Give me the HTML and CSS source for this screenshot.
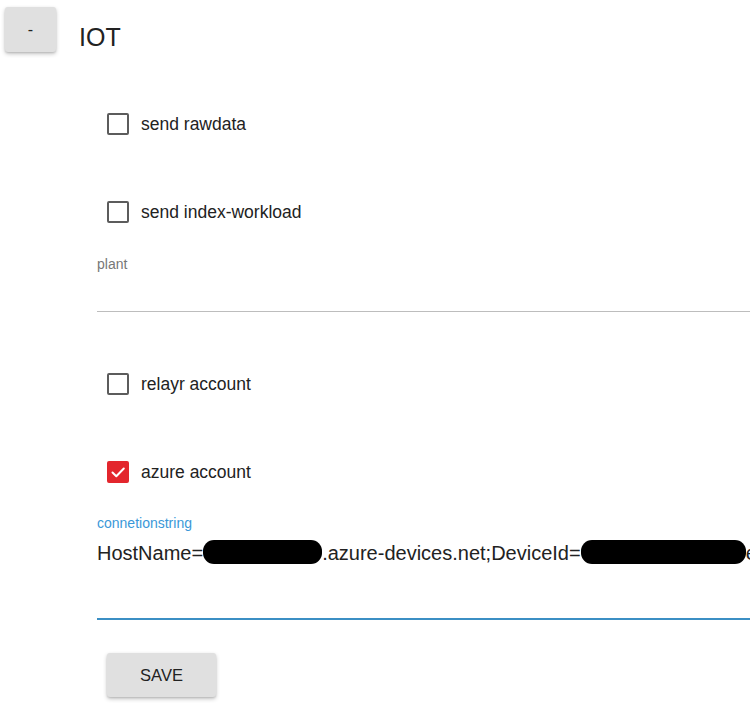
FILE: index.html
```html
<!DOCTYPE html>
<html>
<head>
<meta charset="utf-8">
<link rel="stylesheet" href="styles.css">
</head>
<body>
<div class="header">
  <button class="btn toggle">-</button>
  <h1 class="title">IOT</h1>
</div>
<div class="content">
  <label class="check-row first">
    <span class="box"></span><span class="check-label">send rawdata</span>
  </label>
  <label class="check-row">
    <span class="box"></span><span class="check-label">send index-workload</span>
  </label>
  <div class="field plant">
    <div class="field-label">plant</div>
    <div class="field-input"></div>
  </div>
  <label class="check-row after-field">
    <span class="box"></span><span class="check-label">relayr account</span>
  </label>
  <label class="check-row">
    <span class="box checked"><svg viewBox="0 0 22 22" width="22" height="22"><path d="M5.5 11.5 L9.3 15.2 L16.8 7.5" fill="none" stroke="#fff" stroke-width="2" stroke-linecap="round" stroke-linejoin="round"/></svg></span><span class="check-label">azure account</span>
  </label>
  <div class="field conn">
    <div class="field-label focused">connetionstring</div>
    <div class="field-value">HostName=<span class="redact r1"></span>.azure-devices.net;DeviceId=<span class="redact r2"></span>eviceKey</div>
  </div>
  <button class="btn save">SAVE</button>
</div>
</body>
</html>
```
FILE: styles.css
```css
html, body {
  margin: 0;
  padding: 0;
  background: #fff;
}
body {
  font-family: "Liberation Sans", Arial, sans-serif;
  color: #222;
  width: 750px;
  height: 711px;
  overflow: hidden;
}
.header {
  display: flex;
  align-items: flex-start;
  padding: 7px 0 0 5px;
  height: 45px;
}
.btn {
  font-family: "Liberation Sans", Arial, sans-serif;
  background: #e0e0e0;
  border: none;
  border-radius: 3px;
  box-shadow: 0 2px 4px rgba(0, 0, 0, 0.22), 0 1px 2px rgba(0, 0, 0, 0.12);
  color: #222;
  padding: 0;
  cursor: pointer;
}
.toggle {
  width: 51px;
  height: 45px;
  font-size: 16px;
  line-height: 45px;
  padding-bottom: 4px;
}
.title {
  margin: 16px 0 0 23px;
  font-size: 25px;
  font-weight: normal;
  line-height: 29px;
  color: #222;
}
.content {
  padding-left: 97px;
}
.check-row {
  display: flex;
  align-items: center;
  height: 48px;
  margin-top: 40px;
  padding-left: 10px;
  gap: 12px;
}
.check-row.first {
  margin-top: 48px;
}
.check-row.after-field {
  margin-top: 48px;
}
.box {
  box-sizing: border-box;
  width: 22px;
  height: 22px;
  border: 2px solid #5c5c5c;
  border-radius: 2px;
  display: flex;
  align-items: center;
  justify-content: center;
}
.box.checked {
  background: #e3262d;
  border-color: #e3262d;
}
.box.checked svg {
  flex: none;
}
.check-label {
  font-size: 17.5px;
  line-height: 22px;
  color: #222;
}
.field {
  box-sizing: border-box;
}
.field-label {
  font-size: 14px;
  line-height: 16px;
  color: #777;
}
.field-label.focused {
  color: #3a98d8;
}
.plant {
  padding-top: 20px;
}
.plant .field-input {
  height: 39px;
  border-bottom: 1px solid #bdbdbd;
}
.conn {
  padding-top: 19px;
}
.field-value {
  margin-top: 9px;
  height: 78px;
  font-size: 20px;
  line-height: 24px;
  color: #222;
  white-space: nowrap;
  overflow: hidden;
  border-bottom: 2px solid #3b8fc4;
}
.redact {
  display: inline-block;
  background: #000;
  height: 24px;
  border-radius: 11px;
  vertical-align: -4px;
}
.r1 {
  width: 119px;
}
.r2 {
  width: 165px;
}
.save {
  display: block;
  margin: 33px 0 0 10px;
  width: 109px;
  height: 44px;
  font-size: 16.5px;
}
```
